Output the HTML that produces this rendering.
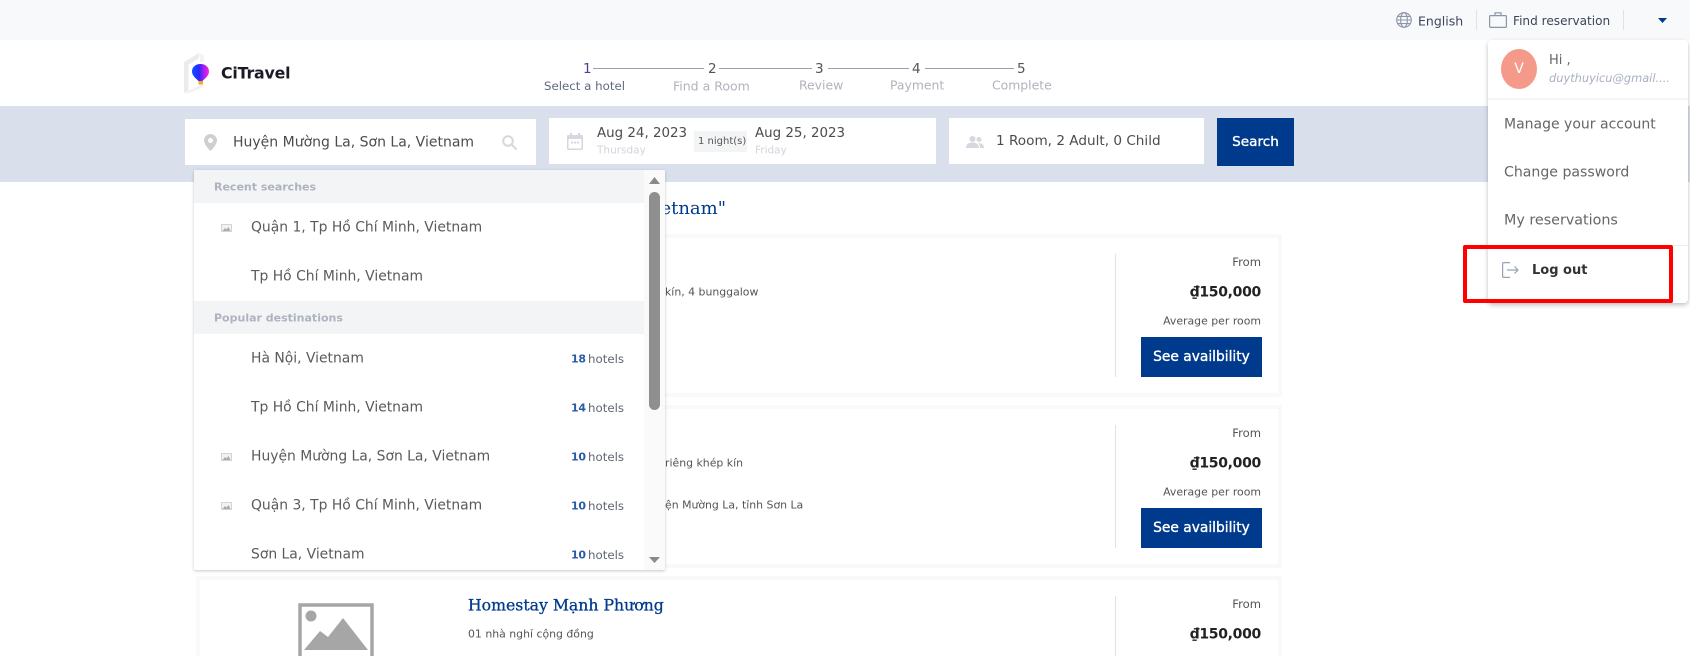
<!DOCTYPE html>
<html lang="en"><head><meta charset="utf-8"><title>CiTravel</title>
<style>
html,body{margin:0;padding:0;background:#fff;width:1690px;height:656px;overflow:hidden}
#p{position:relative;width:1690px;height:656px;overflow:hidden;background:#fff;font-family:"DejaVu Sans","Liberation Sans",sans-serif;color:#444}
.a{position:absolute}
.t{position:absolute;white-space:nowrap;transform:translateY(-50%);line-height:1.2}
.r{position:absolute;white-space:nowrap;transform:translateY(-50%);line-height:1.2;text-align:right}
.slab{font-family:"DejaVu Serif","Liberation Serif",serif;color:#003a8c}
.card{position:absolute;left:196px;width:1078px;border:4px solid #f8f9fb;background:#fff}
.btn{position:absolute;left:1141px;width:121px;height:40px;background:#003a8c;color:#fff;font-size:13.8px;-webkit-text-stroke:.35px #fff;text-align:center;line-height:41px;white-space:nowrap}
.row{font-size:13.9px;color:#5a5a5a;left:251px}
.cnt{font-size:11.8px;color:#5f6672;left:588px}
.n{font-size:11px;color:#2a5aa8;font-weight:700;left:571px;letter-spacing:-.3px}
.step{font-size:13.5px;color:#555;top:68.5px}
.lab{font-size:12.4px;color:#b0b3bd;top:86px}
.ln{position:absolute;height:1px;top:68px;background:#9a9eb0}
.pr{font-size:14px;font-weight:700;color:#222;letter-spacing:-.3px}
.fr{font-size:11.6px;color:#555}
.sm{font-size:10.9px;color:#555}
</style></head><body><div id="p">

<div class="a" style="left:0;top:0;width:1690px;height:40px;background:#f8f9fb"></div>
<svg class="a" style="left:1396px;top:12px" width="16" height="16" viewBox="0 0 16 16" fill="none" stroke="#8b95a8" stroke-width="1.1"><circle cx="8" cy="8" r="7.3"/><ellipse cx="8" cy="8" rx="3.4" ry="7.3"/><path d="M.7 8h14.6M1.7 4.4h12.6M1.700 11.600h12.600"/></svg>
<div class="t" style="left:1418px;top:21px;font-size:12.5px;color:#3c4658">English</div>
<div class="a" style="left:1476px;top:10px;width:1px;height:20px;background:#dfe2e8"></div>
<svg class="a" style="left:1489px;top:12px" width="18" height="16" viewBox="0 0 18 16" fill="none" stroke="#8b95a8" stroke-width="1.2"><rect x=".6" y="3.6" width="16.8" height="11.8" rx="1"/><path d="M6 3.6V.8h6v2.8"/></svg>
<div class="t" style="left:1513px;top:21px;font-size:12.1px;color:#3c4658">Find reservation</div>
<div class="a" style="left:1623px;top:10px;width:1px;height:20px;background:#dfe2e8"></div>
<svg class="a" style="left:1658px;top:18px" width="9" height="5" viewBox="0 0 9 5"><path d="M0 0h9L4.5 5z" fill="#003a8c"/></svg>

<svg class="a" style="left:184px;top:53px" width="28" height="42" viewBox="0 0 28 42">
<path d="M0 9L15 0v5L4.500 12v26L0 40z" fill="#ececec"/><path d="M15 0l5 2v7h-4V5z" fill="#f3f3f3"/><path d="M4.500 38l12-6h3v2L2 41z" fill="#f0f0f0"/>
<defs><linearGradient id="g" x1="0" x2="1" y1="0" y2="0"><stop offset="0" stop-color="#0a50ff"/><stop offset=".42" stop-color="#2a28ff"/><stop offset=".62" stop-color="#8a20f0"/><stop offset="1" stop-color="#ff20e0"/></linearGradient></defs>
<path d="M16.500 11c-4.800 0-8.500 3-8.500 7.500 0 4 4 7 6.500 9.500h4c2.500-2.500 6.500-5.500 6.500-9.500 0-4.500-3.700-7.500-8.500-7.500z" fill="url(#g)"/>
<rect x="14.500" y="28" width="4.500" height="3.500" fill="#f5a623"/></svg>
<div class="t" style="left:221px;top:73.500px;font-size:15.800px;font-weight:700;color:#1a1a24;letter-spacing:-.2px">CiTravel</div>

<div class="t step" style="left:583px;color:#5a3a8c">1</div><div class="ln" style="left:593px;width:111px"></div>
<div class="t step" style="left:708px">2</div><div class="ln" style="left:719px;width:93px"></div>
<div class="t step" style="left:815px">3</div><div class="ln" style="left:828px;width:81px"></div>
<div class="t step" style="left:912px">4</div><div class="ln" style="left:925px;width:89px"></div>
<div class="t step" style="left:1017px">5</div>
<div class="t lab" style="left:544px;color:#5f6980;font-size:11.800px">Select a hotel</div>
<div class="t lab" style="left:673px;font-size:12.500px">Find a Room</div>
<div class="t lab" style="left:799px">Review</div>
<div class="t lab" style="left:890px">Payment</div>
<div class="t lab" style="left:992px">Complete</div>

<div class="a" style="left:0;top:106px;width:1690px;height:76px;background:#d9e0ec"></div>
<div class="a" style="left:185px;top:119px;width:351px;height:46px;background:#fff"></div>
<svg class="a" style="left:204px;top:134px" width="13" height="17" viewBox="0 0 13 17"><path fill-rule="evenodd" d="M6.500 0A6.500 6.500 0 0 0 0 6.500C0 11 6.500 17 6.500 17S13 11 13 6.500A6.500 6.500 0 0 0 6.500 0zm0 9a2.500 2.500 0 1 1 0-5 2.500 2.500 0 0 1 0 5z" fill="#cfcfcf"/></svg>
<div class="t" style="left:233px;top:143px;font-size:14px;color:#4c4c4c">Huyện Mường La, Sơn La, Vietnam</div>
<svg class="a" style="left:502px;top:135px" width="16" height="15" viewBox="0 0 16 15" fill="none" stroke="#d8d8d8" stroke-width="2"><circle cx="6" cy="6" r="4.800"/><path d="M9.500 9.500l5 5"/></svg>

<div class="a" style="left:549px;top:118px;width:387px;height:46px;background:#fff"></div>
<svg class="a" style="left:567px;top:133px" width="16" height="17" viewBox="0 0 16 17"><path fill="#d5d8df" d="M3 0h2v2h6V0h2v2h2a1 1 0 0 1 1 1v13a1 1 0 0 1-1 1H1a1 1 0 0 1-1-1V3a1 1 0 0 1 1-1h2z"/><rect x="1.500" y="6" width="13" height="9.500" fill="#fff"/><path fill="#d5d8df" d="M4 8.500h2v2H4zM7 8.500h2v2H7zM10 8.500h2v2h-2z"/></svg>
<div class="t" style="left:597px;top:133.500px;font-size:13.400px;color:#4c4c4c">Aug 24, 2023</div>
<div class="t" style="left:597px;top:151px;font-size:10.500px;color:#d2d5dc">Thursday</div>
<div class="a" style="left:694px;top:131px;width:53px;height:21px;background:#f3f4f6"></div>
<div class="t" style="left:698px;top:142px;font-size:10px;color:#555">1 night(s)</div>
<div class="t" style="left:755px;top:133.500px;font-size:13.400px;color:#4c4c4c">Aug 25, 2023</div>
<div class="t" style="left:755px;top:151px;font-size:10.500px;color:#d2d5dc">Friday</div>

<div class="a" style="left:949px;top:118px;width:255px;height:46px;background:#fff"></div>
<svg class="a" style="left:966px;top:136px" width="18" height="12" viewBox="0 0 18 12" fill="#d5d8df"><circle cx="6.500" cy="3" r="3"/><circle cx="13" cy="3.500" r="2.500"/><path d="M0 12c0-4 3-5.500 6.500-5.500S13 8 13 12zM14 12c0-2-.5-3.500-1.800-4.800C15.500 7 18 8.500 18 12z"/></svg>
<div class="t" style="left:996px;top:140.500px;font-size:13.600px;color:#4c4c4c">1 Room, 2 Adult, 0 Child</div>
<div class="a" style="left:1217px;top:118px;width:77px;height:48px;background:#003a8c;color:#fff;font-size:13.600px;-webkit-text-stroke:.35px #fff;text-align:center;line-height:49px">Search</div>

<div class="r slab" style="right:964px;top:209px;font-size:18px">Search results for "Huyện Mường La, Sơn La, Vietnam"</div>

<div class="card" style="top:234px;height:155px"></div>
<div class="t sm" style="left:665px;top:292px">kín, 4 bunggalow</div>
<div class="a" style="left:1115px;top:254px;width:1px;height:123px;background:#e2e2e2"></div>
<div class="r fr" style="right:429px;top:263px">From</div>
<div class="r pr" style="right:429px;top:293px">₫150,000</div>
<div class="r sm" style="right:429px;top:320.500px">Average per room</div>
<div class="btn" style="top:337px">See availbility</div>

<div class="card" style="top:405px;height:155px"></div>
<div class="t sm" style="left:665px;top:463px">riêng khép kín</div>
<div class="t sm" style="left:665px;top:505px">ện Mường La, tỉnh Sơn La</div>
<div class="a" style="left:1115px;top:425px;width:1px;height:123px;background:#e2e2e2"></div>
<div class="r fr" style="right:429px;top:434px">From</div>
<div class="r pr" style="right:429px;top:464px">₫150,000</div>
<div class="r sm" style="right:429px;top:491.500px">Average per room</div>
<div class="btn" style="top:508px">See availbility</div>

<div class="card" style="top:576px;height:76px;border-bottom:0"></div>
<svg class="a" style="left:298px;top:603px" width="76" height="53" viewBox="0 0 76 53"><rect x="2" y="2" width="72" height="60" fill="none" stroke="#a6a6a6" stroke-width="3.500"/><circle cx="13" cy="13" r="5.500" fill="#a6a6a6"/><path d="M6 47l16-19 8 6 15-19 25 32z" fill="#a6a6a6"/></svg>
<div class="t slab" style="left:468px;top:606px;font-size:15.700px;-webkit-text-stroke:.3px #003a8c">Homestay Mạnh Phương</div>
<div class="t sm" style="left:468px;top:634px">01 nhà nghỉ cộng đồng</div>
<div class="a" style="left:1115px;top:596px;width:1px;height:60px;background:#e2e2e2"></div>
<div class="r fr" style="right:429px;top:605px">From</div>
<div class="r pr" style="right:429px;top:635px">₫150,000</div>

<div class="a" style="left:194px;top:170px;width:471px;height:400px;background:#fff;box-shadow:0 1px 3px rgba(0,0,0,.22)"></div>
<div class="a" style="left:194px;top:170px;width:450px;height:33px;background:#f3f4f6"></div>
<div class="t" style="left:214px;top:187px;font-size:11px;font-weight:700;color:#adb3c0">Recent searches</div>
<svg class="a" style="left:221px;top:224px" width="11" height="8" viewBox="0 0 11 8"><rect width="11" height="8" fill="#d4d4d4"/><rect x="1" y="1" width="9" height="6" fill="#f2f2f2"/><path d="M1.500 7l2.500-3 1.500 1.500L7.500 3 9.500 7z" fill="#aaa"/></svg>
<div class="t row" style="top:228px">Quận 1, Tp Hồ Chí Minh, Vietnam</div>
<div class="t row" style="top:277px">Tp Hồ Chí Minh, Vietnam</div>
<div class="a" style="left:194px;top:301px;width:450px;height:33px;background:#f3f4f6"></div>
<div class="t" style="left:214px;top:318px;font-size:11px;font-weight:700;color:#adb3c0">Popular destinations</div>
<div class="t row" style="top:359px">Hà Nội, Vietnam</div><div class="t n" style="top:359px">18</div><div class="t cnt" style="top:359px">hotels</div>
<div class="t row" style="top:408px">Tp Hồ Chí Minh, Vietnam</div><div class="t n" style="top:408px">14</div><div class="t cnt" style="top:408px">hotels</div>
<svg class="a" style="left:221px;top:453px" width="11" height="8" viewBox="0 0 11 8"><rect width="11" height="8" fill="#d4d4d4"/><rect x="1" y="1" width="9" height="6" fill="#f2f2f2"/><path d="M1.500 7l2.500-3 1.500 1.500L7.500 3 9.500 7z" fill="#aaa"/></svg>
<div class="t row" style="top:457px">Huyện Mường La, Sơn La, Vietnam</div><div class="t n" style="top:457px">10</div><div class="t cnt" style="top:457px">hotels</div>
<svg class="a" style="left:221px;top:502px" width="11" height="8" viewBox="0 0 11 8"><rect width="11" height="8" fill="#d4d4d4"/><rect x="1" y="1" width="9" height="6" fill="#f2f2f2"/><path d="M1.500 7l2.500-3 1.500 1.500L7.500 3 9.500 7z" fill="#aaa"/></svg>
<div class="t row" style="top:506px">Quận 3, Tp Hồ Chí Minh, Vietnam</div><div class="t n" style="top:506px">10</div><div class="t cnt" style="top:506px">hotels</div>
<div class="t row" style="top:555px">Sơn La, Vietnam</div><div class="t n" style="top:555px">10</div><div class="t cnt" style="top:555px">hotels</div>
<div class="a" style="left:644px;top:170px;width:21px;height:400px;background:#fafafa"></div>
<div class="a" style="left:649px;top:192px;width:11px;height:218px;background:#8f8f8f;border-radius:6px"></div>
<svg class="a" style="left:649px;top:177px" width="11" height="7" viewBox="0 0 11 7"><path d="M0 7h11L5.500 0z" fill="#8a8a8a"/></svg>
<svg class="a" style="left:649px;top:557px" width="11" height="6" viewBox="0 0 11 6"><path d="M0 0h11L5.500 6z" fill="#8a8a8a"/></svg>

<div class="a" style="left:1488px;top:40px;width:200px;height:263px;background:#fff;border-radius:4px;box-shadow:0 2px 5px rgba(0,0,0,.25)"></div>
<div class="a" style="left:1501px;top:49px;width:36px;height:40px;border-radius:50%;background:#f59a8a;color:#fff;font-size:14px;text-align:center;line-height:40px">V</div>
<div class="t" style="left:1549px;top:61px;font-size:13px;color:#666">Hi ,</div>
<div class="t" style="left:1549px;top:79px;font-size:11.400px;font-style:italic;color:#a9b0c2">duythuyicu@gmail....</div>
<div class="a" style="left:1488px;top:98px;width:200px;height:2px;background:#f5f5f5"></div>
<div class="t" style="left:1504px;top:125px;font-size:14px;color:#666">Manage your account</div>
<div class="t" style="left:1504px;top:173px;font-size:14.100px;color:#666">Change password</div>
<div class="t" style="left:1504px;top:221px;font-size:14.300px;color:#666">My reservations</div>
<div class="a" style="left:1488px;top:245px;width:200px;height:1px;background:#eee"></div>
<svg class="a" style="left:1502px;top:262px" width="17" height="16" viewBox="0 0 17 16" fill="none" stroke="#98a1b3" stroke-width="1.200"><path d="M8 .6H1.600a1 1 0 0 0-1 1v12.800a1 1 0 0 0 1 1H8"/><path d="M5 8h11M12.500 4.500L16 8l-3.500 3.500"/></svg>
<div class="t" style="left:1532px;top:271px;font-size:13px;font-weight:700;color:#333">Log out</div>
<div class="a" style="left:1463px;top:245px;width:202px;height:50px;border:4px solid #f00;border-radius:2px"></div>
</div></body></html>
